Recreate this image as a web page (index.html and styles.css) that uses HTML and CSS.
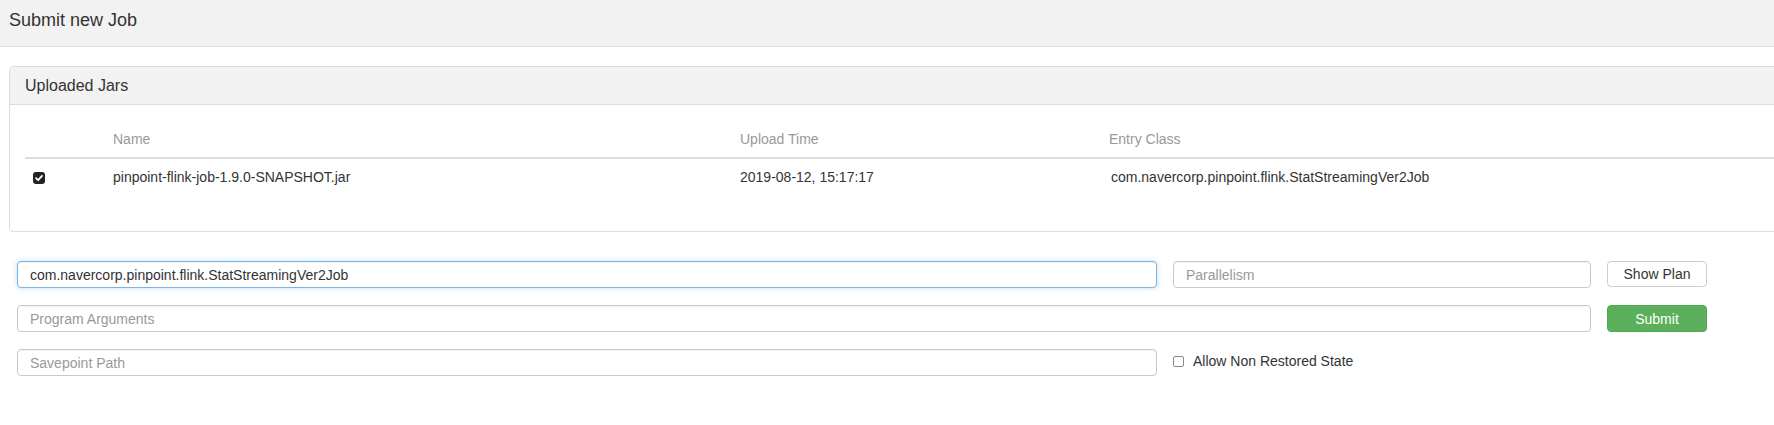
FILE: index.html
```html
<!DOCTYPE html>
<html lang="en">
<head>
<meta charset="utf-8">
<title>Submit new Job</title>
<link rel="stylesheet" href="styles.css">
</head>
<body>
  <div class="page-header">Submit new Job</div>
  <div class="content">
    <div class="panel">
      <div class="panel-heading">Uploaded Jars</div>
      <div class="panel-body">
        <table class="jars">
          <thead>
            <tr>
              <th class="col-check"></th>
              <th class="col-name">Name</th>
              <th class="col-time">Upload Time</th>
              <th class="col-entry">Entry Class</th>
            </tr>
          </thead>
          <tbody>
            <tr>
              <td class="col-check">
                <span class="check-on">
                  <svg width="12" height="12" viewBox="0 0 12 12"><path d="M3 6.2 L5.1 8.2 L9 3.9" fill="none" stroke="#fff" stroke-width="1.8" stroke-linecap="round" stroke-linejoin="round"/></svg>
                </span>
              </td>
              <td>pinpoint-flink-job-1.9.0-SNAPSHOT.jar</td>
              <td>2019-08-12, 15:17:17</td>
              <td class="entry-val">com.navercorp.pinpoint.flink.StatStreamingVer2Job</td>
            </tr>
          </tbody>
        </table>
      </div>
    </div>

    <form class="submit-form">
      <input class="field focused" type="text" value="com.navercorp.pinpoint.flink.StatStreamingVer2Job">
      <input class="field" type="text" placeholder="Parallelism">
      <button type="button" class="btn btn-default">Show Plan</button>

      <input class="field span-2" type="text" placeholder="Program Arguments">
      <button type="button" class="btn btn-success">Submit</button>

      <input class="field" type="text" placeholder="Savepoint Path">
      <label class="check-label"><input type="checkbox" class="check-off"><span>Allow Non Restored State</span></label>
    </form>
  </div>
</body>
</html>
```

FILE: styles.css
```css
html, body {
  margin: 0;
  padding: 0;
  background: #fff;
  overflow: hidden;
}

body {
  font-family: "Liberation Sans", Arial, Helvetica, sans-serif;
  font-size: 14px;
  color: #333;
}

.page-header {
  height: 36px;
  padding: 10px 9px 0;
  background: #f2f2f2;
  border-bottom: 1px solid #e1e1e1;
  font-size: 18px;
  line-height: 20px;
  color: #333;
}

.content {
  padding: 19px 0 0 9px;
}

.panel {
  width: 1900px;
  border: 1px solid #dcdcdc;
  border-radius: 4px;
}

.panel-heading {
  height: 37px;
  padding: 0 15px;
  background: #f2f2f2;
  border-bottom: 1px solid #dcdcdc;
  border-radius: 4px 4px 0 0;
  font-size: 16px;
  line-height: 38px;
  color: #333;
}

.panel-body {
  padding: 16px 15px 15px;
}

.jars {
  width: 100%;
  border-collapse: separate;
  border-spacing: 0;
  margin-bottom: 21px;
  table-layout: fixed;
}

.jars th,
.jars td {
  padding: 8px;
  line-height: 20px;
  text-align: left;
  vertical-align: middle;
  white-space: nowrap;
}

.jars th {
  font-weight: normal;
  color: #999;
  border-bottom: 2px solid #dcdcdc;
}

.jars .col-check { width: 64px; }
.jars .col-name { width: 611px; }
.jars .col-time { width: 353px; }

.jars td.entry-val {
  padding-left: 10px;
}

.check-on {
  display: inline-flex;
  width: 12px;
  height: 12px;
  border-radius: 3px;
  background: #222;
  vertical-align: middle;
}

.submit-form {
  display: grid;
  grid-template-columns: 1140px 418px 100px;
  grid-auto-rows: 27px;
  column-gap: 16px;
  row-gap: 17px;
  margin: 29px 0 0 8px;
}

.field {
  box-sizing: border-box;
  width: 100%;
  height: 27px;
  margin: 0;
  padding: 0 12px;
  border: 1px solid #c8c8c8;
  border-radius: 4px;
  background: #fff;
  box-shadow: inset 0 1px 1px rgba(0, 0, 0, .05);
  font-family: inherit;
  font-size: 14px;
  color: #333;
  outline: none;
}

.field::placeholder {
  color: #999;
}

.field.focused {
  border-color: #7fb3e3;
  box-shadow: inset 0 1px 1px rgba(0, 0, 0, .05), 0 0 5px rgba(102, 175, 233, .45);
}

.span-2 {
  grid-column: 1 / 3;
}

.btn {
  box-sizing: border-box;
  height: 26px;
  margin: 0;
  padding: 0 10px;
  border: 1px solid #ccc;
  border-radius: 4px;
  font-family: inherit;
  font-size: 14px;
  line-height: 24px;
  cursor: pointer;
}

.btn-default {
  background: #fff;
  color: #333;
}

.btn-success {
  height: 27px;
  background: #5cb05c;
  border-color: #53a853;
  color: #fff;
}

.check-label {
  display: flex;
  align-items: center;
  align-self: start;
  height: 22px;
  margin-top: 1px;
  color: #333;
  font-size: 14px;
}

.check-off {
  appearance: none;
  -webkit-appearance: none;
  box-sizing: border-box;
  width: 11px;
  height: 11px;
  margin: 0 9px 0 0;
  border: 1px solid #8a8a8a;
  border-radius: 2px;
  background: #fff;
}
```
